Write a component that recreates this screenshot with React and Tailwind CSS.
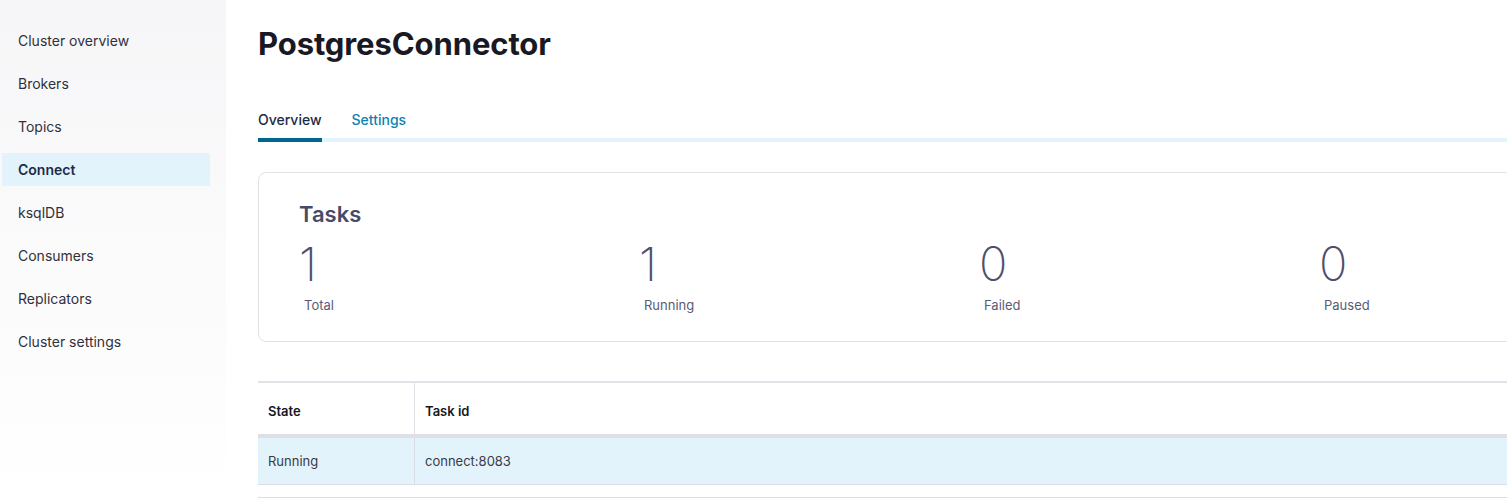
const navItems = [
  "Cluster overview",
  "Brokers",
  "Topics",
  "Connect",
  "ksqlDB",
  "Consumers",
  "Replicators",
  "Cluster settings",
];

const stats = [
  { value: "1", label: "Total" },
  { value: "1", label: "Running" },
  { value: "0", label: "Failed" },
  { value: "0", label: "Paused" },
];

export default function App() {
  return (
    <div className="flex w-[1507px] h-[504px] overflow-hidden bg-white font-['Inter',sans-serif] text-[#2e2e3a]">
      <aside className="w-[226px] shrink-0 bg-gradient-to-b from-[#f6f6f8] to-white pt-[24px]">
        <nav className="flex flex-col gap-[10px]">
          {navItems.map((item) => (
            <div
              key={item}
              className={`ml-[2px] w-[208px] h-[33px] flex items-center pl-4 text-[14px] ${
                item === "Connect" ? "bg-[#e3f3fb] font-semibold text-[#1b2b4b]" : "text-[#30303c]"
              }`}
            >
              {item}
            </div>
          ))}
        </nav>
      </aside>

      <main className="pl-[32px] pt-[26px] shrink-0 w-[1500px]">
        <h1 className="text-[31px] leading-[36px] font-bold text-[#191923] tracking-[-0.1px]">PostgresConnector</h1>

        <div className="mt-[48px] flex gap-[30px] border-b-4 border-[#e3f3fb]">
          <div className="-mb-1 pb-[8px] border-b-4 border-[#00658f] text-[14px] leading-[20px] font-medium text-[#1c2a48]">
            Overview
          </div>
          <div className="pb-[8px] text-[14px] leading-[20px] font-medium text-[#0e82b0]">Settings</div>
        </div>

        <section className="mt-[30px] h-[170px] rounded-lg border border-[#e2e2e6] pl-[40px] pt-[27px]">
          <h2 className="text-[22px] leading-[28px] font-semibold text-[#4a4a68]">Tasks</h2>
          <div className="mt-[11px] flex">
            {stats.map((s) => (
              <div key={s.label} className="w-[340px] shrink-0 flex flex-col">
                <span className="text-[47px] leading-[50px] font-extralight text-[#4e4e6e]">{s.value}</span>
                <span className="mt-[7px] pl-[5px] text-[13px] leading-[18px] text-[#5b5b77]">{s.label}</span>
              </div>
            ))}
          </div>
        </section>

        <div className="mt-[39px] border-t-2 border-[#e2e2e8] text-[13px] leading-[18px]">
          <div className="flex border-b-4 border-[#dfdfe6] font-semibold text-[#17171f]">
            <div className="w-[157px] shrink-0 pl-[10px] pt-[19px] pb-[14px] border-r border-[#e0e0e6]">State</div>
            <div className="pl-[10px] pt-[19px] pb-[14px]">Task id</div>
          </div>
          <div className="flex h-[47px] bg-[#e3f3fb] border-b border-[#dcdce3] text-[#3a3a48]">
            <div className="w-[157px] shrink-0 pl-[10px] flex items-center border-r border-[#dcdce3]">Running</div>
            <div className="pl-[10px] flex items-center">connect:8083</div>
          </div>
        </div>
        <div className="mt-[12px] border-t border-[#dcdce3]" />
      </main>
    </div>
  );
}
